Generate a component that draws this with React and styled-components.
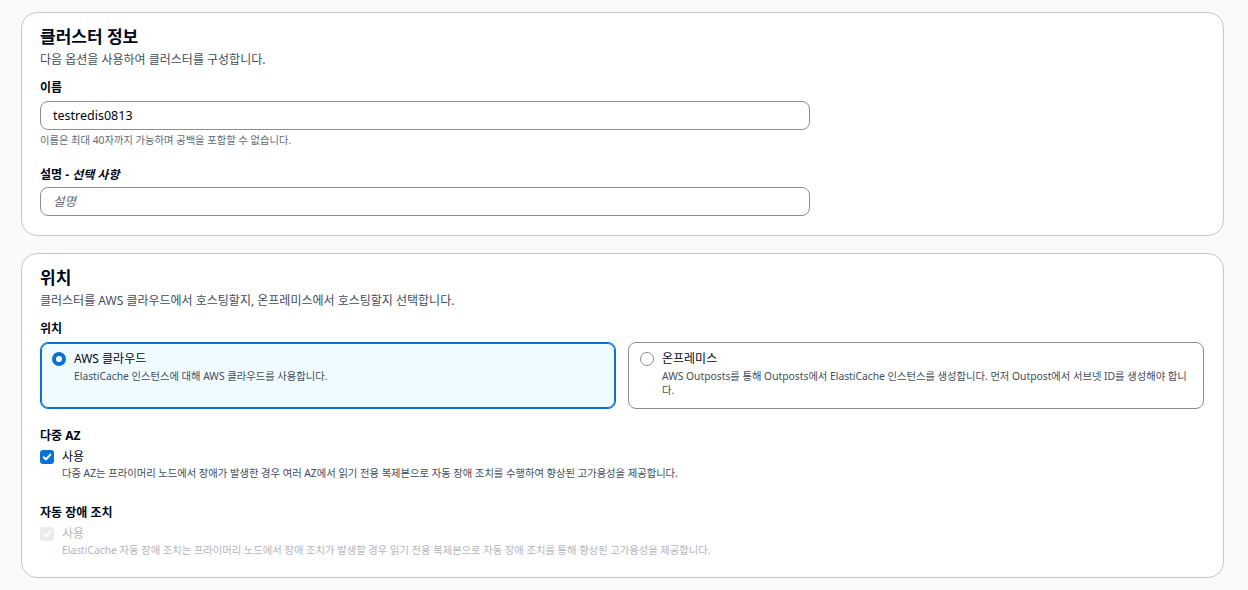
import React from "react";
import styled, { createGlobalStyle } from "styled-components";

const GlobalStyle = createGlobalStyle`
  html, body {
    margin: 0;
    padding: 0;
    background: #fafafa;
  }
  body {
    font-family: "Noto Sans", "Noto Sans CJK KR", sans-serif;
    color: #000716;
  }
`;

const Page = styled.div`
  padding: 12px 24px 12px 21px;
  display: flex;
  flex-direction: column;
  gap: 17px;
`;

const Card = styled.section`
  background: #ffffff;
  border: 1px solid #c6c6cd;
  border-radius: 16px;
  padding: 12px 18px ${(p) => p.$bottom || 18}px;
  display: flex;
  flex-direction: column;
`;

const Title = styled.h2`
  margin: 0;
  font-size: 17px;
  line-height: 24px;
  font-weight: 700;
`;

const Desc = styled.p`
  margin: 3px 0 0;
  font-size: 12px;
  line-height: 16px;
  color: #414d5c;
`;

const Field = styled.div`
  margin-top: ${(p) => p.$top || 12}px;
  display: flex;
  flex-direction: column;
`;

const Label = styled.label`
  font-size: 12px;
  line-height: 16px;
  font-weight: 700;
  margin-bottom: ${(p) => (p.$mb === undefined ? 5 : p.$mb)}px;

  em {
    font-style: italic;
  }
`;

const Input = styled.input`
  box-sizing: border-box;
  width: 770px;
  height: 29px;
  border: 1px solid #8c8c94;
  border-radius: 8px;
  padding: 0 12px;
  font-family: inherit;
  font-size: 12.5px;
  color: #000716;
  background: #fff;
  outline: none;

  &::placeholder {
    font-style: italic;
    color: #656871;
  }
`;

const Hint = styled.div`
  margin-top: 3px;
  font-size: 10.3px;
  line-height: 14px;
  color: #5f6b7a;
`;

const Tiles = styled.div`
  display: grid;
  grid-template-columns: 1fr 1fr;
  gap: 12px;
  width: 1164px;
`;

const Tile = styled.div`
  box-sizing: border-box;
  display: flex;
  gap: 8px;
  align-items: flex-start;
  padding: 6px 11px 11px;
  border-radius: 8px;
  border: 1px solid ${(p) => (p.$selected ? "#0972d3" : "#8c8c94")};
  box-shadow: ${(p) => (p.$selected ? "inset 0 0 0 1px #0972d3" : "none")};
  background: ${(p) => (p.$selected ? "#f0fbff" : "#ffffff")};
`;

const Radio = styled.span`
  flex: none;
  box-sizing: border-box;
  width: 14px;
  height: 14px;
  margin-top: 3px;
  border-radius: 50%;
  background: #fff;
  border: ${(p) => (p.$checked ? "4px solid #0972d3" : "1px solid #8c8c94")};
`;

const OptionText = styled.div`
  display: flex;
  flex-direction: column;
`;

const OptionTitle = styled.div`
  font-size: 12px;
  line-height: ${(p) => p.$lh || 18}px;
  color: ${(p) => (p.$disabled ? "#b4b4bb" : "#000716")};
`;

const OptionDesc = styled.div`
  font-size: 10.3px;
  line-height: 14px;
  color: ${(p) => (p.$disabled ? "#b4b4bb" : "#414d5c")};
`;

const CheckRow = styled.div`
  display: flex;
  gap: 8px;
  align-items: flex-start;
`;

const Box = styled.span`
  flex: none;
  box-sizing: border-box;
  width: 14px;
  height: 14px;
  margin-top: 2px;
  border-radius: 3px;
  background: ${(p) => (p.$disabled ? "#e9ebed" : "#0972d3")};
  display: flex;
  align-items: center;
  justify-content: center;
`;

const CheckBox = ({ disabled }) => (
  <Box $disabled={disabled}>
    <svg width="10" height="10" viewBox="0 0 10 10">
      <path d="M1.8 5.2 L4 7.4 L8.3 2.6" fill="none" stroke="#fff" strokeWidth="2" strokeLinecap="round" strokeLinejoin="round" />
    </svg>
  </Box>
);

export default function App() {
  return (
    <>
      <GlobalStyle />
      <Page>
        <Card $bottom={19}>
          <Title>클러스터 정보</Title>
          <Desc>다음 옵션을 사용하여 클러스터를 구성합니다.</Desc>
          <Field>
            <Label>이름</Label>
            <Input defaultValue="testredis0813" />
            <Hint>이름은 최대 40자까지 가능하며 공백을 포함할 수 없습니다.</Hint>
          </Field>
          <Field $top={20}>
            <Label $mb={4}>
              설명 - <em>선택 사항</em>
            </Label>
            <Input placeholder="설명" />
          </Field>
        </Card>

        <Card $bottom={20}>
          <Title>위치</Title>
          <Desc>클러스터를 AWS 클라우드에서 호스팅할지, 온프레미스에서 호스팅할지 선택합니다.</Desc>
          <Field>
            <Label>위치</Label>
            <Tiles>
              <Tile $selected>
                <Radio $checked />
                <OptionText>
                  <OptionTitle $lh={20}>AWS 클라우드</OptionTitle>
                  <OptionDesc>ElastiCache 인스턴스에 대해 AWS 클라우드를 사용합니다.</OptionDesc>
                </OptionText>
              </Tile>
              <Tile>
                <Radio />
                <OptionText>
                  <OptionTitle $lh={20}>온프레미스</OptionTitle>
                  <OptionDesc>
                    AWS Outposts를 통해 Outposts에서 ElastiCache 인스턴스를 생성합니다. 먼저 Outpost에서 서브넷 ID를 생성해야 합니다.
                  </OptionDesc>
                </OptionText>
              </Tile>
            </Tiles>
          </Field>
          <Field $top={19}>
            <Label $mb={4}>다중 AZ</Label>
            <CheckRow>
              <CheckBox />
              <OptionText>
                <OptionTitle>사용</OptionTitle>
                <OptionDesc>
                  다중 AZ는 프라이머리 노드에서 장애가 발생한 경우 여러 AZ에서 읽기 전용 복제본으로 자동 장애 조치를 수행하여 향상된 고가용성을 제공합니다.
                </OptionDesc>
              </OptionText>
            </CheckRow>
          </Field>
          <Field $top={25}>
            <Label $mb={4}>자동 장애 조치</Label>
            <CheckRow>
              <CheckBox disabled />
              <OptionText>
                <OptionTitle $disabled>사용</OptionTitle>
                <OptionDesc $disabled>
                  ElastiCache 자동 장애 조치는 프라이머리 노드에서 장애 조치가 발생할 경우 읽기 전용 복제본으로 자동 장애 조치를 통해 향상된 고가용성을 제공합니다.
                </OptionDesc>
              </OptionText>
            </CheckRow>
          </Field>
        </Card>
      </Page>
    </>
  );
}
